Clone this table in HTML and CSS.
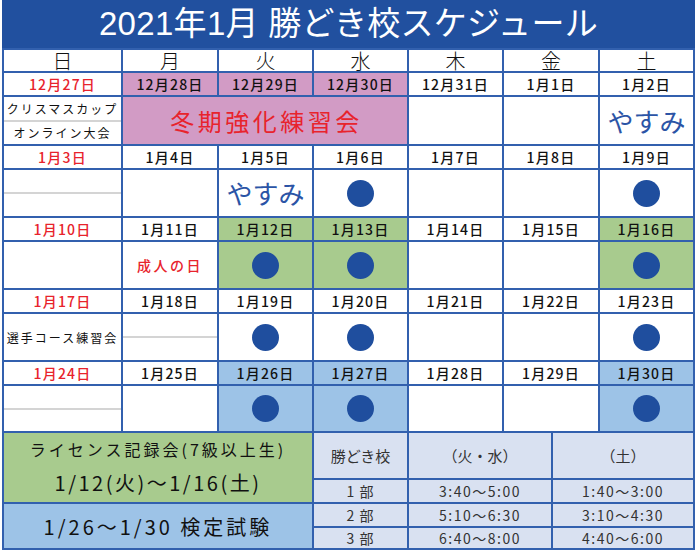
FILE: index.html
```html
<!DOCTYPE html>
<html lang="ja">
<head>
<meta charset="utf-8">
<title>2021年1月 勝どき校スケジュール</title>
<link rel="stylesheet" href="styles.css">
</head>
<body>
<div class="page">
  <div class="title">2021年1月 勝どき校スケジュール</div>
  <div class="frame">
    <div class="cal">
      <div class="c dow">日</div>
      <div class="c dow">月</div>
      <div class="c dow">火</div>
      <div class="c dow">水</div>
      <div class="c dow">木</div>
      <div class="c dow">金</div>
      <div class="c dow">土</div>

      <div class="c date sun">12月27日</div>
      <div class="c date purple">12月28日</div>
      <div class="c date purple">12月29日</div>
      <div class="c date purple">12月30日</div>
      <div class="c date">12月31日</div>
      <div class="c date">1月1日</div>
      <div class="c date">1月2日</div>

      <div class="c split">
        <div class="half top small">クリスマスカップ</div>
        <div class="half small">オンライン大会</div>
      </div>
      <div class="c purple event span3">冬期強化練習会</div>
      <div class="c"></div>
      <div class="c"></div>
      <div class="c rest">やすみ</div>

      <div class="c date sun">1月3日</div>
      <div class="c date">1月4日</div>
      <div class="c date">1月5日</div>
      <div class="c date">1月6日</div>
      <div class="c date">1月7日</div>
      <div class="c date">1月8日</div>
      <div class="c date">1月9日</div>

      <div class="c split"><div class="half top"></div><div class="half"></div></div>
      <div class="c"></div>
      <div class="c rest">やすみ</div>
      <div class="c"><span class="dot"></span></div>
      <div class="c"></div>
      <div class="c"></div>
      <div class="c"><span class="dot"></span></div>

      <div class="c date sun">1月10日</div>
      <div class="c date">1月11日</div>
      <div class="c date green">1月12日</div>
      <div class="c date green">1月13日</div>
      <div class="c date">1月14日</div>
      <div class="c date">1月15日</div>
      <div class="c date green">1月16日</div>

      <div class="c"></div>
      <div class="c holiday">成人の日</div>
      <div class="c green"><span class="dot"></span></div>
      <div class="c green"><span class="dot"></span></div>
      <div class="c"></div>
      <div class="c"></div>
      <div class="c green"><span class="dot"></span></div>

      <div class="c date sun">1月17日</div>
      <div class="c date">1月18日</div>
      <div class="c date">1月19日</div>
      <div class="c date">1月20日</div>
      <div class="c date">1月21日</div>
      <div class="c date">1月22日</div>
      <div class="c date">1月23日</div>

      <div class="c small">選手コース練習会</div>
      <div class="c split"><div class="half top"></div><div class="half"></div></div>
      <div class="c"><span class="dot"></span></div>
      <div class="c"><span class="dot"></span></div>
      <div class="c"></div>
      <div class="c"></div>
      <div class="c"><span class="dot"></span></div>

      <div class="c date sun">1月24日</div>
      <div class="c date">1月25日</div>
      <div class="c date blue">1月26日</div>
      <div class="c date blue">1月27日</div>
      <div class="c date">1月28日</div>
      <div class="c date">1月29日</div>
      <div class="c date blue">1月30日</div>

      <div class="c split"><div class="half top"></div><div class="half"></div></div>
      <div class="c"></div>
      <div class="c blue"><span class="dot"></span></div>
      <div class="c blue"><span class="dot"></span></div>
      <div class="c"></div>
      <div class="c"></div>
      <div class="c blue"><span class="dot"></span></div>
    </div>

    <div class="bottom">
      <div class="lic">
        <div class="lic-title">ライセンス記録会(7級以上生)</div>
        <div class="lic-date">1/12(火)〜1/16(土)</div>
      </div>
      <div class="t thead">勝どき校</div>
      <div class="t thead">（火・水）</div>
      <div class="t thead">（土）</div>

      <div class="t">1 部</div>
      <div class="t time">3:40〜5:00</div>
      <div class="t time">1:40〜3:00</div>

      <div class="exam">1/26〜1/30 検定試験</div>
      <div class="t">2 部</div>
      <div class="t time">5:10〜6:30</div>
      <div class="t time">3:10〜4:30</div>

      <div class="t">3 部</div>
      <div class="t time">6:40〜8:00</div>
      <div class="t time">4:40〜6:00</div>
    </div>
  </div>
</div>
</body>
</html>
```

FILE: styles.css
```css
html, body {
  margin: 0;
  padding: 0;
  background: #ffffff;
}

body {
  font-family: "Noto Sans CJK JP", "Noto Sans", sans-serif;
  color: #111;
}

.page {
  width: 693px;
  margin-left: 2px;
}

.title {
  height: 48px;
  background: #21509f;
  color: #ffffff;
  font-family: "Liberation Sans", "Noto Sans CJK JP", sans-serif;
  font-size: 33px;
  line-height: 48px;
  text-align: center;
  letter-spacing: 0.3px;
}

.frame {
  background: #3260ae;
  padding: 2px;
}

.cal {
  display: grid;
  grid-template-columns: 117px 94px 93px 93px 93px 94px 93px;
  grid-template-rows: 21px 22px 47px 22px 46px 22px 46px 22px 46px 22px 45px;
  gap: 2px;
}

.c {
  background: #ffffff;
  display: flex;
  align-items: center;
  justify-content: center;
  white-space: nowrap;
  min-width: 0;
  min-height: 0;
}

.dow {
  font-size: 20px;
  font-weight: 300;
  line-height: 21px;
}

.date {
  font-size: 14px;
  letter-spacing: 1.2px;
  font-weight: 500;
  line-height: 22px;
}

.sun {
  color: #e8232c;
}

.purple {
  background: #d29bc5;
}

.green {
  background: #a8cb8e;
}

.blue {
  background: #9dc3e7;
}

.span3 {
  grid-column: span 3;
}

.event {
  color: #e8232c;
  font-size: 24px;
  letter-spacing: 3.5px;
  padding-left: 3px;
}

.rest {
  color: #2b54a6;
  font-size: 26px;
  line-height: 1;
}

.holiday {
  color: #e8232c;
  font-size: 14px;
  letter-spacing: 2.5px;
  font-weight: 500;
}

.small {
  font-size: 12px;
  letter-spacing: 2px;
}

.split {
  flex-direction: column;
  align-items: stretch;
}

.half {
  flex: 1;
  display: flex;
  align-items: center;
  justify-content: center;
}

.half.top {
  border-bottom: 2px solid #d4d4d4;
}

.dot {
  width: 27px;
  height: 27px;
  border-radius: 50%;
  background: #1f4e9e;
}

.bottom {
  margin-top: 2px;
  display: grid;
  grid-template-columns: 308px 93px 142px 140px;
  grid-template-rows: 45px 22px 22px 20px;
  gap: 2px;
}

.lic {
  grid-row: span 2;
  background: #a8cb8e;
  display: flex;
  flex-direction: column;
  align-items: center;
  justify-content: center;
  gap: 12px;
  color: #111;
}

.lic-title {
  font-size: 16px;
  letter-spacing: 3px;
  line-height: 1.2;
}

.lic-date {
  font-size: 20px;
  letter-spacing: 2.5px;
  line-height: 1.2;
}

.exam {
  grid-row: span 2;
  background: #9dc3e7;
  display: flex;
  align-items: center;
  justify-content: center;
  font-size: 20px;
  letter-spacing: 3px;
  color: #111;
}

.t {
  background: #d9e1f1;
  color: #333;
  font-size: 14px;
  display: flex;
  align-items: center;
  justify-content: center;
  line-height: 1;
  letter-spacing: 1px;
}

.thead {
  font-size: 15px;
  letter-spacing: 0;
}

.time {
  letter-spacing: 1.5px;
}
```
